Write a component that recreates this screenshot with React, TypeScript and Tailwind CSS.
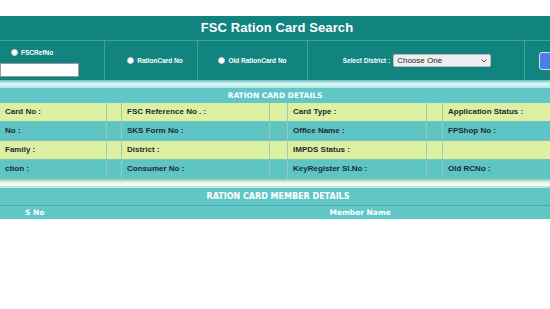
import React from "react";

const V = { fontFamily: "Verdana, 'DejaVu Sans', sans-serif" };
const A = { fontFamily: "'Liberation Sans', Arial, sans-serif" };

function Radio({ label }: { label: string }) {
  return (
    <div className="flex items-center gap-[3px]">
      <span className="w-[7px] h-[7px] rounded-full bg-white border border-[#d0d0d0]" />
      <span className="text-[6.5px] font-bold text-white" style={A}>{label}</span>
    </div>
  );
}

function Row({ bg, cells }: { bg: string; cells: string[] }) {
  const widths = ["w-[107px]", "w-[15px]", "w-[148px]", "w-[18px]", "w-[139px]", "w-[16px]", "flex-1"];
  return (
    <div className={`flex h-[19px] ${bg} border-b border-[#7fbfbf]`}>
      {widths.map((w, i) => (
        <div
          key={i}
          className={`${w} shrink-0 h-full flex items-center px-[5px] text-[8px] font-bold text-[#1c2a38] ${i < 6 ? "border-r border-[#9fc9c0]" : ""} whitespace-nowrap overflow-hidden`}
          style={A}
        >
          {i % 2 === 0 ? cells[i / 2] : ""}
        </div>
      ))}
    </div>
  );
}

export default function App() {
  return (
    <div className="w-[550px] h-[309px] bg-white overflow-hidden" style={V}>
      <div className="h-[16px]" />
      <div className="h-[24px] bg-[#118480] flex items-center justify-center">
        <span className="text-white font-bold text-[13px] tracking-[0.1px] pl-[4px]" style={A}>
          FSC Ration Card Search
        </span>
      </div>
      <div className="h-[40px] bg-[#118480] border-t border-[#3ea39e] flex overflow-hidden">
        <div className="w-[105px] shrink-0 border-r border-[#3ea39e] flex flex-col pt-[7px] gap-[5px]">
          <div className="ml-[11px]"><Radio label="FSCRefNo" /></div>
          <div className="w-[79px] h-[14px] bg-white border border-[#9a9a9a]" />
        </div>
        <div className="w-[93px] shrink-0 border-r border-[#3ea39e] flex items-center justify-center pl-[8px]">
          <Radio label="RationCard No" />
        </div>
        <div className="w-[110px] shrink-0 border-r border-[#3ea39e] flex items-center justify-center">
          <Radio label="Old RationCard No" />
        </div>
        <div className="w-[217px] shrink-0 border-r border-[#3ea39e] flex items-center justify-center gap-[3px] pl-[2px]">
          <span className="text-[6.5px] font-bold text-white" style={A}>Select District :</span>
          <div className="w-[98px] h-[13px] bg-[#eeeef0] rounded-[2px] border border-[#bbb] flex items-center justify-between px-[3px]">
            <span className="text-[8px] text-[#222]" style={A}>Choose One</span>
            <svg width="6" height="4" viewBox="0 0 6 4"><path d="M0.5 0.5 L3 3 L5.5 0.5" stroke="#555" fill="none" strokeWidth="1" /></svg>
          </div>
        </div>
        <div className="flex-1 min-w-0 flex items-center pl-[14px]">
          <div className="w-[20px] h-[18px] shrink-0 rounded-[3px] bg-[#4a7fe6] border border-[#cfe0ff]" />
        </div>
      </div>
      <div className="h-[8px] bg-gradient-to-b from-[#5fc3c0] via-[#e6fbf9] to-[#a8e3e1]" />
      <div className="h-[15px] bg-[#61c6c6] flex items-center justify-center">
        <span className="text-white font-bold text-[7.5px]">RATION CARD DETAILS</span>
      </div>
      <Row bg="bg-[#dbf1a1]" cells={["Card No :", "FSC Reference No . :", "Card Type :", "Application Status :"]} />
      <Row bg="bg-[#5ec4c4]" cells={["No :", "SKS Form No :", "Office Name :", "FPShop No :"]} />
      <Row bg="bg-[#dbf1a1]" cells={["Family :", "District :", "IMPDS Status :", ""]} />
      <Row bg="bg-[#5ec4c4]" cells={["ction :", "Consumer No :", "KeyRegister Sl.No :", "Old RCNo :"]} />
      <div className="h-[7px] bg-gradient-to-b from-[#7fc9a8] via-[#e8f7e0] to-[#ffffff]" />
      <div className="h-[2px] bg-[#b8e6e4]" />
      <div className="h-[18px] bg-[#61c6c6] flex items-center justify-center border-b border-[#4aa9a9]">
        <span className="text-white font-bold text-[8px] pl-[6px]">RATION CARD MEMBER DETAILS</span>
      </div>
      <div className="h-[13px] bg-[#61c6c6] flex items-center text-[7.5px] font-bold text-white">
        <span className="ml-[25px]">S No</span>
        <span className="ml-[285px]">Member Name</span>
      </div>
    </div>
  );
}
